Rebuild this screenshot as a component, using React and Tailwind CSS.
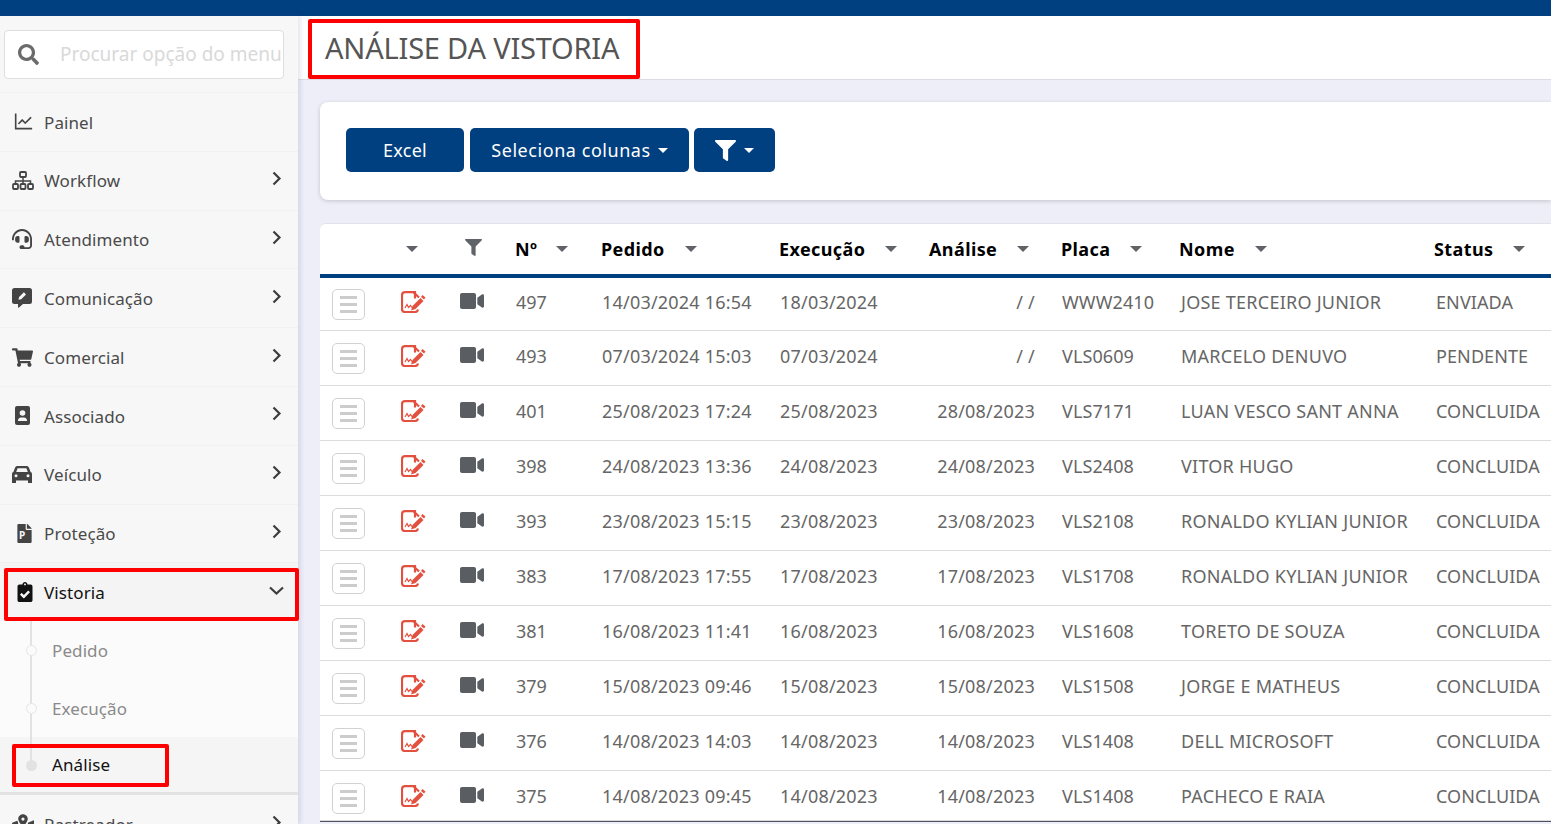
import React from 'react';
import { FaSearch, FaHeadset, FaShoppingCart, FaClipboardCheck, FaMapMarkedAlt, FaVideo, FaFilter, FaFile } from 'react-icons/fa';
import { AiOutlineLineChart } from 'react-icons/ai';

const font = "font-['Noto_Sans','Open_Sans',sans-serif]";

const WorkflowIcon = () => (
    <svg width="22" height="19" viewBox="0 0 22 19" fill="none" stroke="currentColor" strokeWidth="1.800">
        <rect x="8" y="1" width="6" height="5" rx="1" />
        <rect x="1" y="13" width="5" height="5" rx="1" />
        <rect x="8.500" y="13" width="5" height="5" rx="1" />
        <rect x="16" y="13" width="5" height="5" rx="1" />
        <path d="M11 6v7M3.500 13v-3h15v3" strokeWidth="1.500" />
    </svg>
);

const ChatEditIcon = () => (
    <svg width="20" height="20" viewBox="0 0 20 20" fill="currentColor">
        <path d="M2.500 0h15A2.500 2.500 0 0 1 20 2.500v11a2.500 2.500 0 0 1-2.500 2.500H11l-4 3.500c-.5.400-1 .100-1-.500V16H2.500A2.500 2.500 0 0 1 0 13.500v-11A2.500 2.500 0 0 1 2.500 0z" />
        <path d="M6.500 11.800l.6-2.700 4.800-4.800 2.100 2.100-4.800 4.800z" fill="#f7f7f7" />
    </svg>
);

const ContactIcon = () => (
    <svg width="15" height="19" viewBox="0 0 15 19" fill="currentColor">
        <path d="M2 0h11a2 2 0 0 1 2 2v15a2 2 0 0 1-2 2H2a2 2 0 0 1-2-2V2a2 2 0 0 1 2-2z" />
        <circle cx="7.500" cy="7" r="2.800" fill="#f7f7f7" />
        <path d="M3 14.500c0-2 1.600-3 3-3h3c1.400 0 3 1 3 3v.5H3z" fill="#f7f7f7" />
    </svg>
);

const CarIcon = () => (
    <svg width="20" height="17" viewBox="0 0 20 17" fill="currentColor">
        <path d="M5.500 0h9c1.100 0 2 .600 2.400 1.600L18.600 6c.900.400 1.400 1.200 1.400 2.200V17h-4v-2.500H4V17H0V8.200C0 7.200.500 6.400 1.400 6l1.700-4.400C3.500.600 4.400 0 5.500 0z" />
        <path d="M5.600 2.300h8.800L15.800 6H4.200z" fill="#f7f7f7" />
        <circle cx="4" cy="9.800" r="1.500" fill="#f7f7f7" />
        <circle cx="16" cy="9.800" r="1.500" fill="#f7f7f7" />
    </svg>
);

const ProtecaoIcon = () => (
    <span className="relative flex items-center justify-center">
        <FaFile size={19} />
        <span className="absolute top-[5px] left-[4px] text-[10px] leading-[12px] font-bold text-[#f7f7f7]">P</span>
    </span>
);

const ChevronRight = () => (
    <svg width="10" height="15" viewBox="0 0 10 15" fill="none" stroke="#3d3d3d" strokeWidth="2.200" className="ml-auto mr-[16px] -mt-[4px]">
        <path d="M1.500 1.500l6 6-6 6" />
    </svg>
);

const ChevronDown = () => (
    <svg width="15" height="10" viewBox="0 0 15 10" fill="none" stroke="#3d3d3d" strokeWidth="2.200" className="ml-auto mr-[14px] -mt-[2px]">
        <path d="M1 1.500l6.500 6 6.500-6" />
    </svg>
);

const menu = [
    { label: 'Painel', icon: <AiOutlineLineChart size={23} />, arrow: false },
    { label: 'Workflow', icon: <WorkflowIcon />, arrow: true },
    { label: 'Atendimento', icon: <FaHeadset size={20} />, arrow: true },
    { label: 'Comunicação', icon: <ChatEditIcon />, arrow: true },
    { label: 'Comercial', icon: <FaShoppingCart size={21} />, arrow: true },
    { label: 'Associado', icon: <span className="pl-[3px]"><ContactIcon /></span>, arrow: true },
    { label: 'Veículo', icon: <CarIcon />, arrow: true },
    { label: 'Proteção', icon: <span className="pl-[3px]"><ProtecaoIcon /></span>, arrow: true },
];

const rows = [
    ['497', '14/03/2024 16:54', '18/03/2024', '/ /', 'WWW2410', 'JOSE TERCEIRO JUNIOR', 'ENVIADA'],
    ['493', '07/03/2024 15:03', '07/03/2024', '/ /', 'VLS0609', 'MARCELO DENUVO', 'PENDENTE'],
    ['401', '25/08/2023 17:24', '25/08/2023', '28/08/2023', 'VLS7171', 'LUAN VESCO SANT ANNA', 'CONCLUIDA'],
    ['398', '24/08/2023 13:36', '24/08/2023', '24/08/2023', 'VLS2408', 'VITOR HUGO', 'CONCLUIDA'],
    ['393', '23/08/2023 15:15', '23/08/2023', '23/08/2023', 'VLS2108', 'RONALDO KYLIAN JUNIOR', 'CONCLUIDA'],
    ['383', '17/08/2023 17:55', '17/08/2023', '17/08/2023', 'VLS1708', 'RONALDO KYLIAN JUNIOR', 'CONCLUIDA'],
    ['381', '16/08/2023 11:41', '16/08/2023', '16/08/2023', 'VLS1608', 'TORETO DE SOUZA', 'CONCLUIDA'],
    ['379', '15/08/2023 09:46', '15/08/2023', '15/08/2023', 'VLS1508', 'JORGE E MATHEUS', 'CONCLUIDA'],
    ['376', '14/08/2023 14:03', '14/08/2023', '14/08/2023', 'VLS1408', 'DELL MICROSOFT', 'CONCLUIDA'],
    ['375', '14/08/2023 09:45', '14/08/2023', '14/08/2023', 'VLS1408', 'PACHECO E RAIA', 'CONCLUIDA'],
];

const Caret = ({ className = '' }) => (
    <span className={`inline-block w-0 h-0 border-x-[6px] border-x-transparent border-t-[6px] border-t-[#5f6368] ${className}`} />
);

const WhiteCaret = () => (
    <span className="inline-block w-0 h-0 border-x-[5px] border-x-transparent border-t-[5px] border-t-white" />
);

const SignatureIcon = () => (
    <svg width="25" height="22" viewBox="0 0 25 22" fill="none" stroke="#e2513f" strokeWidth="2.200" className="block">
        <path d="M14 7.500V1.200H4a3 3 0 0 0-3 3V18a3 3 0 0 0 3 3h10a3 3 0 0 0 3-2.500" />
        <path d="M12.500 1.200 18 6.500" />
        <path d="M4 17l2-3.500 1.500 3 2-2 1.500 2h3" strokeWidth="1.200" />
        <path d="M11.500 15l8-8 3 3-8 8-4.500 1.500z" fill="#e2513f" stroke="none" />
        <path d="M21.500 4l3 2.500-1.500 2-3-2.500z" fill="#e2513f" stroke="none" />
    </svg>
);

const headers = [
    { label: '', caret: 'ml-[86px]', w: 'w-[139px]' },
    { label: '', w: 'w-[56px]', filter: true },
    { label: 'Nº', caret: 'ml-[19px]', w: 'w-[86px]' },
    { label: 'Pedido', caret: 'ml-[20px]', w: 'w-[178px]' },
    { label: 'Execução', caret: 'ml-[20px]', w: 'w-[150px]' },
    { label: 'Análise', caret: 'ml-[20px]', w: 'w-[132px]' },
    { label: 'Placa', caret: 'ml-[20px]', w: 'w-[118px]' },
    { label: 'Nome', caret: 'ml-[20px]', w: 'w-[255px]' },
    { label: 'Status', caret: 'ml-[20px]', w: 'w-[160px]' },
];

const Sidebar = () => (
    <aside className="relative z-10 w-[298px] h-full shrink-0 bg-[#f7f7f7] shadow-[2px_0_5px_rgba(90,90,140,0.18)] flex flex-col overflow-hidden">
        <div className="h-[77px] shrink-0 px-[4px] pt-[14px] border-b border-[#f1f1f1]">
            <div className="h-[49px] w-[280px] bg-white border border-[#dedede] rounded-[4px] flex items-center overflow-hidden">
                <FaSearch size={21} className="ml-[13px] text-[#6b6b6b] shrink-0" />
                <span className="ml-[21px] text-[19px] text-[#d9d9d9] whitespace-nowrap">Procurar opção do menu</span>
            </div>
        </div>
        {menu.map((item) => (
            <div key={item.label} className="h-[58.800px] shrink-0 flex items-center border-b border-[#f1f1f1] text-[#4a4a4a]">
                <span className="w-[44px] pl-[12px] flex items-center text-[#444]">{item.icon}</span>
                <span className="text-[17px] tracking-[0.1px] mt-[1px]">{item.label}</span>
                {item.arrow && <ChevronRight />}
            </div>
        ))}
        <div className="h-[58px] shrink-0 flex items-center bg-[#f4f4f4] shadow-[0_2px_4px_rgba(0,0,0,0.08)] text-[#111]">
            <span className="w-[44px] pl-[15px] flex items-center"><FaClipboardCheck size={20} /></span>
            <span className="text-[17px] tracking-[0.1px]">Vistoria</span>
            <ChevronDown />
        </div>
        <div className="relative bg-[#fbfbfb] text-[17px] tracking-[0.1px] text-[#8a8a8a]">
            <span className="absolute left-[30px] top-0 h-[142px] w-[2px] bg-[#e2e2e2]" />
            {['Pedido', 'Execução'].map((s) => (
                <div key={s} className="relative h-[58px] flex items-center pl-[52px]">
                    <span className="absolute left-[26px] top-[24px] w-[11px] h-[11px] rounded-full bg-[#fbfbfb] border border-[#e6e6e6]" />
                    {s}
                </div>
            ))}
            <div className="relative h-[55px] flex items-center pl-[52px] bg-[#f5f5f5] text-[#111]">
                <span className="absolute left-[30px] top-0 h-[24px] w-[2px] bg-[#e2e2e2]" />
                <span className="absolute left-[26px] top-[23px] w-[11px] h-[11px] rounded-full bg-[#e2e2e2]" />
                Análise
            </div>
        </div>
        <div className="h-[3px] shrink-0 bg-[#e3e3e3]" />
        <div className="h-[58px] shrink-0 flex items-center text-[#4a4a4a]">
            <span className="w-[44px] pl-[12px] flex items-center text-[#444]"><FaMapMarkedAlt size={22} /></span>
            <span className="text-[17px] tracking-[0.1px]">Rastreador</span>
            <ChevronRight />
        </div>
    </aside>
);

const DataTable = () => (
    <div className="ml-[22px] mt-[23px] bg-white rounded-tl-[6px] border-t border-[#e2e2ea] overflow-hidden">
        <table className="table-fixed w-[1274px] border-collapse">
            <thead>
                <tr className="h-[52px] border-b-[4px] border-[#003f80]">
                    {headers.map((h, i) => (
                        <th key={i} className={`${h.w} p-0 text-left text-[18px] tracking-[0.4px] font-bold text-black whitespace-nowrap`}>
                            {h.filter ? <FaFilter size={17} className="text-[#5f6368] ml-[6px] -mt-[3px]" /> : (
                                <span className="flex items-center">
                                    {h.label}
                                    {h.caret && <Caret className={h.caret} />}
                                </span>
                            )}
                        </th>
                    ))}
                </tr>
            </thead>
            <tbody className="text-[18px] text-[#666]">
                {rows.map((r, i) => (
                    <tr key={r[0]} className={`border-b border-[#dcdcdc] ${i === 0 ? 'h-[54px]' : i === 9 ? 'h-[50px] [&>td]:pt-[5px]' : 'h-[55px]'}`}>
                        <td className="p-0">
                            <div className="flex items-center pl-[12px] pt-[1px]">
                                <span className="w-[33px] h-[31px] border border-[#d2d2d2] rounded-[5px] flex flex-col items-center justify-center gap-[4px]">
                                    <span className="w-[17px] h-[3px] bg-[#cccccc]" />
                                    <span className="w-[17px] h-[3px] bg-[#cccccc]" />
                                    <span className="w-[17px] h-[3px] bg-[#cccccc]" />
                                </span>
                                <span className="ml-[36px] -mt-[5px]"><SignatureIcon /></span>
                            </div>
                        </td>
                        <td className="p-0"><FaVideo size={24} className="text-[#5a5d61] ml-[1px] -mt-[5px]" /></td>
                        <td className="p-0 pl-[1px] pb-[2px]">{r[0]}</td>
                        <td className="p-0 pl-[1px] pb-[2px] tracking-[0.2px]">{r[1]}</td>
                        <td className="p-0 pl-[1px] pb-[2px] tracking-[0.2px]">{r[2]}</td>
                        <td className="p-0 pb-[2px] text-right pr-[26px] tracking-[0.2px]">{r[3]}</td>
                        <td className="p-0 pl-[1px] pb-[2px] tracking-[0.1px]">{r[4]}</td>
                        <td className="p-0 pl-[2px] pb-[2px] tracking-[0.25px] whitespace-nowrap">{r[5]}</td>
                        <td className="p-0 pl-[2px] pb-[2px] tracking-[0.1px]">{r[6]}</td>
                    </tr>
                ))}
            </tbody>
        </table>
        <div className="h-[1px] bg-[#4a5160]" />
    </div>
);

export default function App() {
    return (
        <div className={`${font} relative w-[1551px] h-[824px] overflow-hidden bg-[#eeeef8] flex flex-col`}>
            <div className="h-[16px] shrink-0 bg-[#003f80]" />
            <div className="flex flex-1 min-h-0">
                <Sidebar />
                <main className="flex-1 min-w-0 overflow-hidden">
                    <div className="h-[64px] bg-white border-b border-[#dcdce6] pl-[27px] flex items-center">
                        <h1 className="text-[29px] font-normal text-[#555] tracking-[-0.2px]">ANÁLISE DA VISTORIA</h1>
                    </div>
                    <div className="ml-[22px] mt-[22px] h-[98px] bg-white rounded-l-[8px] shadow-[0_1px_4px_rgba(0,0,0,0.18)] pl-[26px] flex items-start pt-[26px] gap-[6px] text-white text-[18px]">
                        <button className="w-[118px] h-[44px] bg-[#003f80] rounded-[5px] tracking-[0.3px]">Excel</button>
                        <button className="w-[219px] h-[44px] bg-[#003f80] rounded-[5px] flex items-center justify-center gap-[7px] tracking-[0.55px]">
                            Seleciona colunas <WhiteCaret />
                        </button>
                        <button className="w-[81px] h-[44px] -ml-[1px] bg-[#003f80] rounded-[5px] flex items-center justify-center gap-[8px]">
                            <FaFilter size={21} /> <WhiteCaret />
                        </button>
                    </div>
                    <DataTable />
                </main>
            </div>

            {/* red annotation boxes */}
            <div className="absolute left-[308px] top-[19px] w-[332px] h-[60px] border-[4px] border-[#f00] rounded-[2px] pointer-events-none z-20" />
            <div className="absolute left-[4px] top-[568px] w-[295px] h-[53px] border-[4px] border-[#f00] rounded-[2px] pointer-events-none z-20" />
            <div className="absolute left-[12px] top-[744px] w-[157px] h-[43px] border-[4px] border-[#f00] rounded-[2px] pointer-events-none z-20" />
        </div>
    );
}
